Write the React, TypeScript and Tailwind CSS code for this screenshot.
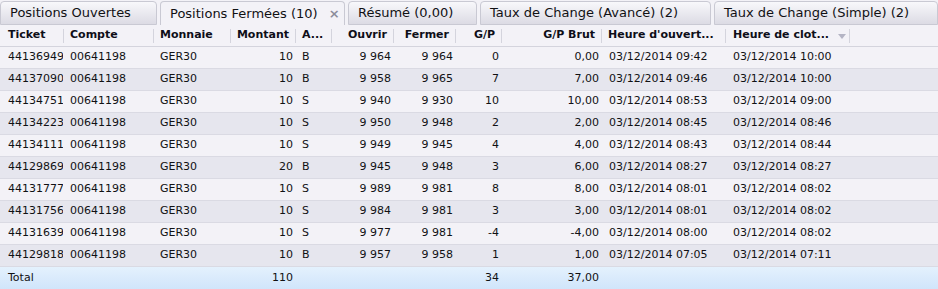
import React from 'react'

type Row = {
  ticket: string
  montant: string
  achat: string
  ouvrir: string
  fermer: string
  gp: string
  brut: string
  ouv: string
  clot: string
}

const rows: Row[] = [
  { ticket: '441369495', montant: '10', achat: 'B', ouvrir: '9 964', fermer: '9 964', gp: '0', brut: '0,00', ouv: '09:42', clot: '10:00' },
  { ticket: '441370902', montant: '10', achat: 'B', ouvrir: '9 958', fermer: '9 965', gp: '7', brut: '7,00', ouv: '09:46', clot: '10:00' },
  { ticket: '441347511', montant: '10', achat: 'S', ouvrir: '9 940', fermer: '9 930', gp: '10', brut: '10,00', ouv: '08:53', clot: '09:00' },
  { ticket: '441342233', montant: '10', achat: 'S', ouvrir: '9 950', fermer: '9 948', gp: '2', brut: '2,00', ouv: '08:45', clot: '08:46' },
  { ticket: '441341114', montant: '10', achat: 'S', ouvrir: '9 949', fermer: '9 945', gp: '4', brut: '4,00', ouv: '08:43', clot: '08:44' },
  { ticket: '441298695', montant: '20', achat: 'B', ouvrir: '9 945', fermer: '9 948', gp: '3', brut: '6,00', ouv: '08:27', clot: '08:27' },
  { ticket: '441317776', montant: '10', achat: 'S', ouvrir: '9 989', fermer: '9 981', gp: '8', brut: '8,00', ouv: '08:01', clot: '08:02' },
  { ticket: '441317567', montant: '10', achat: 'S', ouvrir: '9 984', fermer: '9 981', gp: '3', brut: '3,00', ouv: '08:01', clot: '08:02' },
  { ticket: '441316398', montant: '10', achat: 'S', ouvrir: '9 977', fermer: '9 981', gp: '-4', brut: '-4,00', ouv: '08:00', clot: '08:02' },
  { ticket: '441298189', montant: '10', achat: 'B', ouvrir: '9 957', fermer: '9 958', gp: '1', brut: '1,00', ouv: '07:05', clot: '07:11' },
]

const grid =
  'grid grid-cols-[64px_90px_77px_65px_36px_62px_62px_46px_100px_124px_124px_1fr]'

const tabs = [
  { label: 'Positions Ouvertes', w: 'w-[157px]' },
  { label: 'Positions Fermées (10)', w: 'w-[185px]', active: true },
  { label: 'Résumé (0,00)', w: 'w-[129px]' },
  { label: 'Taux de Change (Avancé) (2)', w: 'w-[231px]' },
  { label: 'Taux de Change (Simple) (2)', w: 'w-[224px]' },
]

function Head({ children, right, pl = 'pl-[6px]', arrow }: { children?: React.ReactNode; right?: boolean; pl?: string; arrow?: boolean }) {
  return (
    <div className="flex h-full items-center">
      <div className={`flex min-w-0 flex-1 items-center overflow-hidden whitespace-nowrap ${right ? 'justify-end pr-[6px]' : pl}`}>
        {children}
        {arrow && (
          <svg width="8" height="5" viewBox="0 0 8 5" className="ml-[9px] mt-[1px]">
            <path d="M0 0h8L4 5z" fill="#b4b4c4" />
          </svg>
        )}
      </div>
      <div className="h-[14px] w-px bg-[#d4d4dd]" />
    </div>
  )
}

function Cell({ children, right, pl = 'pl-[6px]' }: { children?: React.ReactNode; right?: boolean; pl?: string }) {
  return (
    <div className={`overflow-hidden whitespace-nowrap ${right ? 'pr-[3px] text-right' : pl}`}>{children}</div>
  )
}

export default function App() {
  return (
    <div className="h-[289px] w-[938px] overflow-hidden bg-[#f3f2f7] font-['DejaVu_Sans',Verdana,sans-serif] text-[#111114]">
      <div className="flex h-[25px] items-end gap-[3px] pt-px">
        {tabs.map((t) =>
          t.active ? (
            <div
              key={t.label}
              className={`${t.w} flex h-[24px] items-center rounded-t-[4px] border border-b-0 border-[#c9c9d3] bg-[#f3f2f7] pl-[9px] text-[13px]`}
            >
              <span>{t.label}</span>
              <span className="ml-[11px] text-[13px] font-bold text-[#8c8c9a]">×</span>
            </div>
          ) : (
            <div
              key={t.label}
              className={`${t.w} flex h-[24px] items-center rounded-t-[4px] border border-[#c9c9d3] bg-gradient-to-b from-[#f8f8fb] to-[#dcdbe4] pl-[9px] text-[13px]`}
            >
              {t.label}
            </div>
          )
        )}
      </div>

      <div className={`${grid} h-[22px] border-b border-[#d4d4dd] text-[11px] font-bold text-[#0e0e18]`}>
        <Head pl="pl-[8px]">Ticket</Head>
        <Head>Compte</Head>
        <Head>Monnaie</Head>
        <Head right>Montant</Head>
        <Head>A...</Head>
        <Head right>Ouvrir</Head>
        <Head right>Fermer</Head>
        <Head right>G/P</Head>
        <Head right>G/P Brut</Head>
        <Head>Heure d'ouvert...</Head>
        <Head pl="pl-[7px]" arrow>
          Heure de clot...
        </Head>
        <div />
      </div>

      {rows.map((r, i) => (
        <div
          key={r.ticket}
          className={`${grid} h-[22px] items-center border-b border-[#dadae3] text-[11px] ${i % 2 ? 'bg-[#e6e6ee]' : 'bg-[#f3f2f7]'}`}
        >
          <div className="ml-[8px] w-[55px] overflow-hidden whitespace-nowrap">{r.ticket}</div>
          <Cell>00641198</Cell>
          <Cell>GER30</Cell>
          <Cell right>{r.montant}</Cell>
          <Cell>{r.achat}</Cell>
          <Cell right>{r.ouvrir}</Cell>
          <Cell right>{r.fermer}</Cell>
          <Cell right>{r.gp}</Cell>
          <Cell right>{r.brut}</Cell>
          <Cell pl="pl-[7px]">03/12/2014 {r.ouv}</Cell>
          <Cell pl="pl-[7px]">03/12/2014 {r.clot}</Cell>
          <div />
        </div>
      ))}

      <div className={`${grid} h-[22px] items-center bg-gradient-to-b from-[#e4f1fd] to-[#d0e5fb] text-[11px]`}>
        <Cell pl="pl-[8px]">Total</Cell>
        <Cell />
        <Cell />
        <Cell right>110</Cell>
        <Cell />
        <Cell />
        <Cell />
        <Cell right>34</Cell>
        <Cell right>37,00</Cell>
        <Cell />
        <Cell />
        <div />
      </div>
    </div>
  )
}
